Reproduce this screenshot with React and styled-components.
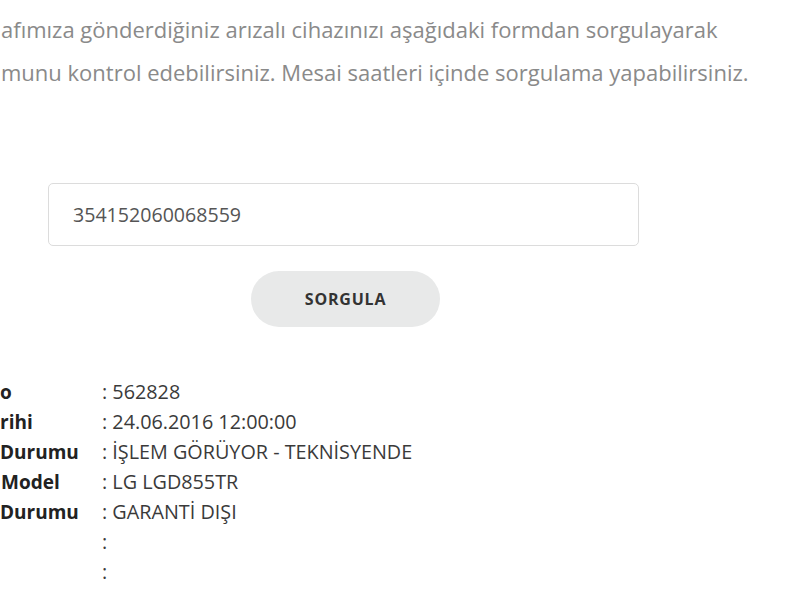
import React from 'react';
import styled, { createGlobalStyle } from 'styled-components';

const GlobalStyle = createGlobalStyle`
  html, body {
    margin: 0;
    padding: 0;
    background: #ffffff;
    overflow: hidden;
  }
  body {
    font-family: "Open Sans", "Liberation Sans", sans-serif;
  }
`;

const Page = styled.div`
  width: 800px;
  height: 600px;
  padding-top: 8px;
  box-sizing: border-box;
  overflow: hidden;
`;

const Intro = styled.p`
  margin: 0 0 90px 1px;
  font-size: 22px;
  line-height: 42.5px;
  color: #8a8a8a;
  white-space: nowrap;
`;

const Form = styled.form`
  width: 591px;
  margin-left: 48px;
  display: flex;
  flex-direction: column;
  align-items: center;
  gap: 25px;
`;

const Field = styled.input`
  width: 100%;
  height: 63px;
  box-sizing: border-box;
  padding: 0 24px;
  border: 1px solid #dcdcdc;
  border-radius: 5px;
  font-family: inherit;
  font-size: 19.6px;
  color: #555555;
  background: #ffffff;
  outline: none;
`;

const Button = styled.button`
  width: 189px;
  height: 56px;
  margin-left: 4px;
  border: 0;
  border-radius: 28px;
  background: #e8e9e9;
  font-family: inherit;
  font-size: 16px;
  font-weight: 700;
  letter-spacing: 0.8px;
  color: #333333;
  cursor: pointer;
`;

const Results = styled.div`
  margin-top: 50px;
  display: grid;
  grid-template-columns: 102px 1fr;
  line-height: 30px;
`;

const Label = styled.div`
  font-size: 19px;
  font-weight: 700;
  color: #222222;
  white-space: nowrap;
  overflow: hidden;
  padding-left: ${(p) => p.$shift || 0}px;
`;

const Value = styled.div`
  font-size: 19.8px;
  color: #3a3a3a;
  white-space: nowrap;
`;

const rows = [
  { label: 'o', value: '562828' },
  { label: 'rihi', value: '24.06.2016 12:00:00' },
  { label: 'Durumu', value: 'İŞLEM GÖRÜYOR - TEKNİSYENDE' },
  { label: 'Model', value: 'LG LGD855TR', shift: 1 },
  { label: 'Durumu', value: 'GARANTİ DIŞI' },
  { label: '', value: '' },
  { label: '', value: '' },
];

export default function App() {
  return (
    <Page>
      <GlobalStyle />
      <Intro>
        afımıza gönderdiğiniz arızalı cihazınızı aşağıdaki formdan sorgulayarak
        <br />
        munu kontrol edebilirsiniz. Mesai saatleri içinde sorgulama yapabilirsiniz.
      </Intro>
      <Form onSubmit={(e) => e.preventDefault()}>
        <Field defaultValue="354152060068559" />
        <Button type="submit">SORGULA</Button>
      </Form>
      <Results>
        {rows.map((r, i) => (
          <React.Fragment key={i}>
            <Label $shift={r.shift}>{r.label}</Label>
            <Value>: {r.value}</Value>
          </React.Fragment>
        ))}
      </Results>
    </Page>
  );
}
